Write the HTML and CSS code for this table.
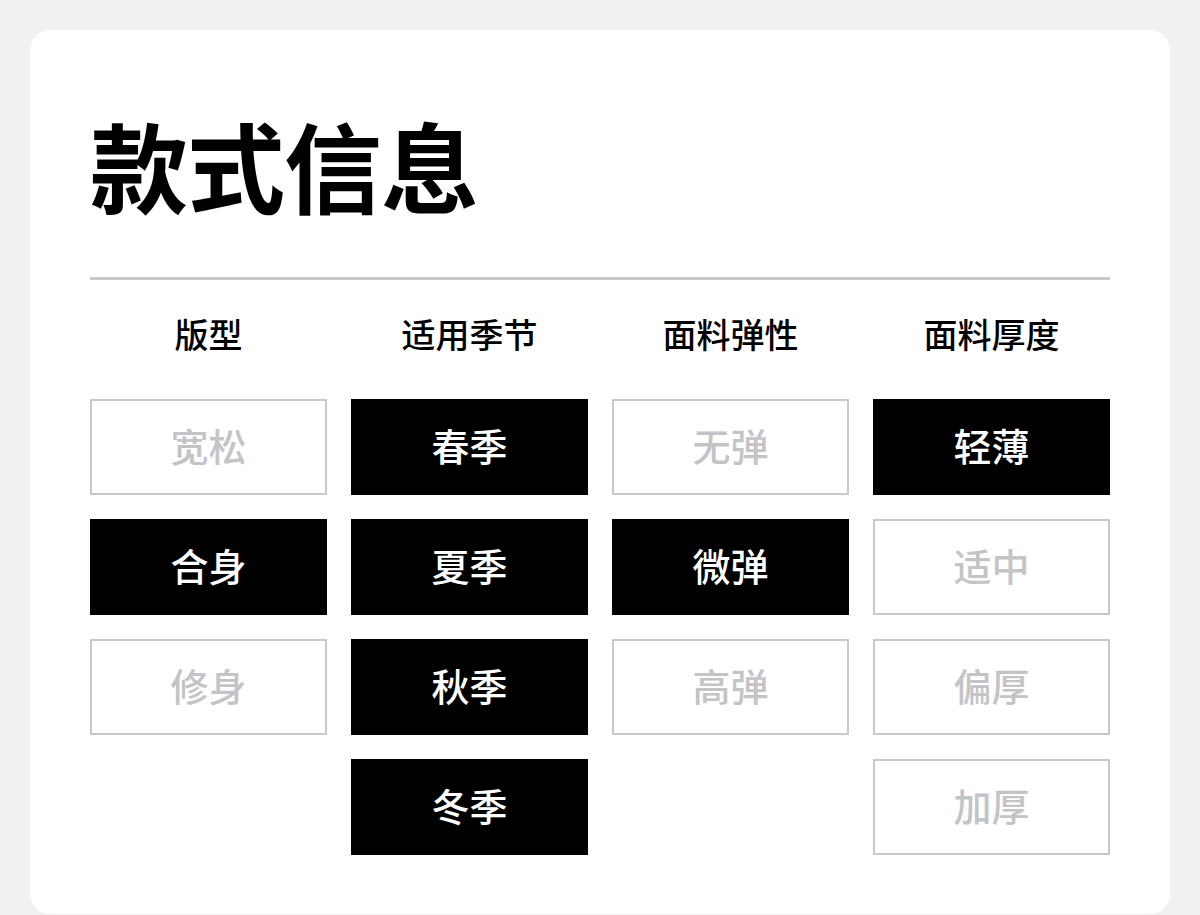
FILE: index.html
```html
<!DOCTYPE html>
<html lang="zh-CN">
<head>
    <meta charset="UTF-8">
    <meta name="viewport" content="width=device-width, initial-scale=1.0">
    <title>款式信息</title>
    <link rel="stylesheet" href="styles.css">
</head>
<body>
    <div class="card">
        <h1 class="title">款式信息</h1>
        <div class="divider"></div>

        <div class="attr-grid">
            <!-- 版型 -->
            <div class="attr-col">
                <div class="attr-head">版型</div>
                <div class="tag">宽松</div>
                <div class="tag active">合身</div>
                <div class="tag">修身</div>
            </div>

            <!-- 适用季节 -->
            <div class="attr-col">
                <div class="attr-head">适用季节</div>
                <div class="tag active">春季</div>
                <div class="tag active">夏季</div>
                <div class="tag active">秋季</div>
                <div class="tag active">冬季</div>
            </div>

            <!-- 面料弹性 -->
            <div class="attr-col">
                <div class="attr-head">面料弹性</div>
                <div class="tag">无弹</div>
                <div class="tag active">微弹</div>
                <div class="tag">高弹</div>
            </div>

            <!-- 面料厚度 -->
            <div class="attr-col">
                <div class="attr-head">面料厚度</div>
                <div class="tag active">轻薄</div>
                <div class="tag">适中</div>
                <div class="tag">偏厚</div>
                <div class="tag">加厚</div>
            </div>
        </div>
    </div>
</body>
</html>
```

FILE: styles.css
```css
body {
    margin: 0;
    background-color: #f1f1f1;
    font-family: "Noto Sans CJK SC", "Noto Sans", sans-serif;
    color: #000;
}

.card {
    margin: 30px 30px 0;
    background-color: #fff;
    border-radius: 20px;
    padding: 83px 60px 59px;
}

.title {
    margin: 0;
    font-size: 98px;
    line-height: 100px;
    font-weight: 700;
    letter-spacing: -1px;
}

.divider {
    height: 3px;
    background-color: #c9c9cd;
    margin-top: 64px;
}

.attr-grid {
    display: grid;
    grid-template-columns: repeat(4, 1fr);
    column-gap: 24px;
}

.attr-col {
    display: flex;
    flex-direction: column;
    gap: 24px;
}

.attr-head {
    height: 48px;
    line-height: 48px;
    margin: 30px 0 17px;
    text-align: center;
    font-size: 34px;
    font-weight: 500;
}

.tag {
    height: 96px;
    box-sizing: border-box;
    border: 2px solid #c9c9cd;
    padding-bottom: 6px;
    display: flex;
    align-items: center;
    justify-content: center;
    font-size: 38px;
    font-weight: 500;
    color: #c4c4c8;
}

.tag.active {
    background-color: #000;
    border-color: #000;
    color: #fff;
}
```
